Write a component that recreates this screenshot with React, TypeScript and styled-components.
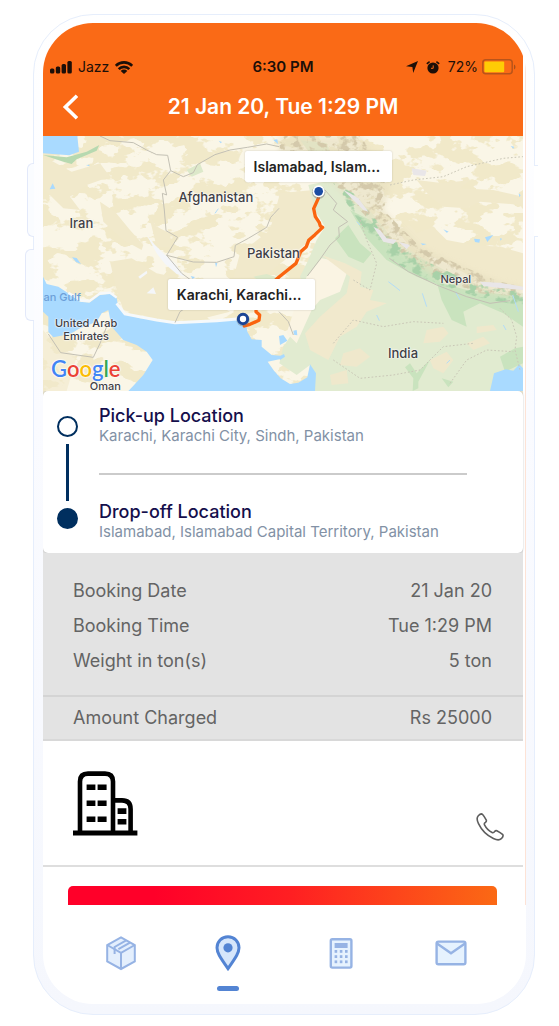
import React from "react";
import styled, { createGlobalStyle } from "styled-components";

const GlobalStyle = createGlobalStyle`
  *, *::before, *::after { box-sizing: border-box; }
  body {
    margin: 0;
    background: #fff;
    font-family: Inter, "Liberation Sans", sans-serif;
    -webkit-font-smoothing: antialiased;
  }
  button { padding: 0; border: 0; background: none; font: inherit; color: inherit; cursor: pointer; }
  svg { display: block; }
`;

/* ---------- phone shell ---------- */

const Page = styled.div`
  padding: 14px 24px 11px 33px;
`;

const Phone = styled.div`
  position: relative;
  border-radius: 60px;
  border: 1px solid #e6eefc;
  padding: 8px 8px 10px 9px;
  background: linear-gradient(#ffffff, #fafbff 40%, #f5f7fd);
`;

const SideKey = styled.span<{ $top: number; $height: number; $width: number }>`
  position: absolute;
  left: ${(p) => -p.$width}px;
  top: ${(p) => p.$top}px;
  width: ${(p) => p.$width}px;
  height: ${(p) => p.$height}px;
  border: 1px solid #e3e9fa;
  border-right: 0;
  border-radius: 6px 0 0 6px;
  background: #fafcff;
`;

const PowerKey = styled.span`
  position: absolute;
  right: -4px;
  top: 150px;
  width: 4px;
  height: 72px;
  background: #fff;
  border: 1px solid #e6eefc;
  border-width: 1px 0;
`;

const Screen = styled.main`
  overflow: hidden;
  border-radius: 50px;
  background: #fff;
`;

const Content = styled.div`
  padding-right: 2px;
  border-right: 1px solid #fde3d6;
`;

/* ---------- header ---------- */

const Header = styled.header`
  padding: 34px 7px 9px;
  background: #fa6a16;
`;

const StatusBar = styled.div`
  display: grid;
  grid-template-columns: 1fr auto 1fr;
  align-items: center;
  height: 20px;
  color: #1c0f08;
  font-size: 14px;
  line-height: 20px;
`;

const StatusGroup = styled.div<{ $end?: boolean }>`
  display: flex;
  align-items: center;
  gap: ${(p) => (p.$end ? 8 : 6)}px;
  justify-content: ${(p) => (p.$end ? "flex-end" : "flex-start")};
`;

const Battery = styled.span`
  display: flex;
  align-items: center;
  gap: 4px;
`;

const Clock = styled.strong`
  font-size: 15px;
  font-weight: 600;
`;

const TitleBar = styled.div`
  display: grid;
  grid-template-columns: 40px 1fr 40px;
  align-items: center;
  height: 40px;
  margin-top: 10px;
`;

const BackButton = styled.button`
  display: flex;
  align-items: center;
  height: 40px;
  padding-left: 12px;
`;

const Title = styled.h1`
  margin: 0;
  color: #fff;
  font-size: 21px;
  font-weight: 600;
  line-height: 24px;
  text-align: center;
  white-space: nowrap;
`;

/* ---------- map ---------- */

const MapArea = styled.section`
  position: relative;
  overflow: hidden;
  aspect-ratio: 480 / 255;

  > svg { width: 100%; height: 100%; }
`;

const Place = styled.span<{ $x: number; $y: number; $size?: number; $water?: boolean }>`
  position: absolute;
  left: ${(p) => p.$x}%;
  top: ${(p) => p.$y}%;
  transform: translate(-50%, -50%);
  color: ${(p) => (p.$water ? "#6d9fd8" : "#3f4044")};
  font-size: ${(p) => p.$size ?? 13}px;
  font-weight: 500;
  line-height: 13px;
  text-align: center;
  white-space: nowrap;
  text-shadow: ${(p) => (p.$water ? "none" : "0 0 2px #fff, 0 0 2px #fff, 0 0 1px #fff")};
`;

const Callout = styled.span<{ $x: number; $y: number }>`
  position: absolute;
  left: ${(p) => p.$x}%;
  top: ${(p) => p.$y}%;
  width: 147px;
  padding: 0 9px;
  border-radius: 2px;
  background: #fff;
  box-shadow: 0 0 2px rgba(0, 0, 0, 0.2);
  color: #222;
  font-size: 14px;
  font-weight: 600;
  line-height: 31px;
  white-space: nowrap;
`;

const GoogleMark = styled.span`
  position: absolute;
  left: 8px;
  bottom: 12px;
  font-family: Lato, sans-serif;
  font-size: 22px;
  font-weight: 600;
  line-height: 20px;
  text-shadow: 0 0 2px #fff, 0 0 2px #fff, 0 0 2px #fff;
`;

const Letter = styled.span<{ $color: string }>`
  color: ${(p) => p.$color};
`;

/* ---------- locations ---------- */

const CardBackdrop = styled.div`
  background: linear-gradient(#ece6d0 50%, #e3e3e3 50%);
`;

const LocationCard = styled.section`
  display: flex;
  gap: 21px;
  padding: 15px 56px 11px 14px;
  border-radius: 5px;
  background: #fff;
  box-shadow: 0 0 2px rgba(0, 0, 0, 0.25);
`;

const Track = styled.div`
  display: flex;
  flex-direction: column;
  align-items: center;
  flex: none;
  padding-top: 10px;
`;

const Stop = styled.span<{ $filled?: boolean }>`
  width: 21px;
  height: 21px;
  border: 2px solid #002f5f;
  border-radius: 50%;
  background: ${(p) => (p.$filled ? "#002f5f" : "#fff")};
`;

const Link = styled.span`
  width: 3px;
  height: 57px;
  margin: 7px 0;
  background: #002f5f;
`;

const Stops = styled.div`
  flex: 1;
  min-width: 0;
`;

const StopTitle = styled.h2`
  margin: 0;
  color: #150f4c;
  font-size: 18px;
  font-weight: 500;
  line-height: 20px;
`;

const StopAddress = styled.p`
  margin: 0;
  color: #8291a5;
  font-size: 15px;
  line-height: 20px;
  white-space: nowrap;
`;

const Divider = styled.hr`
  height: 2px;
  margin: 27px 0;
  border: 0;
  background: #cbcbcb;
`;

/* ---------- booking details ---------- */

const Details = styled.dl`
  margin: 0;
  padding-top: 20px;
  background: #e3e3e3;
  border-bottom: 2px solid #d8d8d8;
`;

const DetailRow = styled.div<{ $total?: boolean }>`
  display: flex;
  justify-content: space-between;
  padding: 0 31px 0 30px;
  margin-top: ${(p) => (p.$total ? 17 : 0)}px;
  border-top: ${(p) => (p.$total ? "2px solid #d4d4d4" : "0")};
  color: #646464;
  font-size: 18px;
  line-height: ${(p) => (p.$total ? 42 : 35)}px;

  dd { margin: 0; }
`;

const Contact = styled.section`
  display: flex;
  align-items: flex-end;
  justify-content: space-between;
  height: 126px;
  padding: 0 19px 24px 30px;
  border-bottom: 2px solid #dedede;
`;

const CompanyIcon = styled.svg`
  margin-bottom: 5px;
`;

const ActionArea = styled.div`
  padding: 19px 26px 0 25px;
`;

const ActionButton = styled.button`
  display: block;
  width: 100%;
  height: 19px;
  border-radius: 5px 5px 0 0;
  background: linear-gradient(90deg, #ff0029 20%, #ff1f22 52%, #fb6914);
`;

/* ---------- tab bar ---------- */

const TabBar = styled.nav`
  display: grid;
  grid-template-columns: 108fr 106fr 120fr 100fr;
  height: 99px;
  padding: 30px 25px 0 24px;
`;

const Tab = styled.button<{ $active?: boolean }>`
  display: flex;
  flex-direction: column;
  align-items: center;
  height: 60px;

  &::after {
    content: "";
    flex: none;
    width: 22px;
    height: 5px;
    margin-top: 15px;
    border-radius: 3px;
    background: ${(p) => (p.$active ? "#5384d3" : "transparent")};
  }
`;

/* Each unit of the map drawing is a third of a pixel at the default width. */
const MapDrawing = () => (
  <svg viewBox="129 18 1440 765" preserveAspectRatio="xMidYMid slice" aria-hidden="true">
    <defs>
      <filter id="patches" x="0" y="0" width="100%" height="100%" colorInterpolationFilters="sRGB">
        <feTurbulence type="fractalNoise" baseFrequency="0.013 0.02" numOctaves="4" seed="11" />
        <feColorMatrix values="0 0 0 0 0.945  0 0 0 0 0.914  0 0 0 0 0.79  24 0 0 0 -12" />
        <feComposite in2="SourceGraphic" operator="in" />
      </filter>
      <filter id="ridges" x="0" y="0" width="100%" height="100%" colorInterpolationFilters="sRGB">
        <feTurbulence type="fractalNoise" baseFrequency="0.04 0.05" numOctaves="3" seed="4" />
        <feColorMatrix values="0 0 0 0 0.83  0 0 0 0 0.79  0 0 0 0 0.67  7 0 0 0 -3.5" />
        <feComposite in2="SourceGraphic" operator="in" />
      </filter>
      <filter id="forest" x="0" y="0" width="100%" height="100%" colorInterpolationFilters="sRGB">
        <feTurbulence type="fractalNoise" baseFrequency="0.03 0.04" numOctaves="3" seed="8" />
        <feColorMatrix values="0 0 0 0 0.66  0 0 0 0 0.82  0 0 0 0 0.66  7 0 0 0 -3.5" />
        <feComposite in2="SourceGraphic" operator="in" />
      </filter>
      <filter id="soft"><feGaussianBlur stdDeviation="8" /></filter>
    </defs>

    <rect x="129" y="18" width="1440" height="765" fill="#faf6e7" />
    <rect x="129" y="18" width="1440" height="765" filter="url(#patches)" />

    {/* arid belts */}
    <g fill="#f1e9cb">
      <path d="M129 85 L160 95 L215 125 L300 100 L330 140 L260 165 L210 200 L240 240 L190 235 L129 175Z" />
      <path d="M300 215 L345 245 L390 300 L430 345 L425 360 L370 330 L310 275Z" />
      <path d="M330 395 L395 385 L470 430 L540 445 L590 490 L690 545 L600 568 L525 570 L420 555 L370 540 L350 480Z" />
      <path d="M445 250 L470 290 L510 310 L515 350 L470 350Z" />
      <path d="M840 190 L940 180 L945 240 L960 290 L920 340 L880 370 L790 440 L700 445 L720 370 L810 300Z" />
      <path d="M1250 150 L1330 160 L1410 150 L1380 175 L1480 180 L1569 200 L1569 225 L1440 215 L1400 235 L1330 230 L1290 200Z" />
      <path d="M1190 300 L1230 285 L1250 310 L1300 290 L1340 330 L1420 345 L1500 350 L1569 370 L1569 480 L1450 460 L1340 400 L1230 350Z" />
      <path d="M129 600 L165 640 L230 680 L200 783 L129 783Z" opacity="0.6" />
    </g>

    {/* Indian plains */}
    <path
      d="M925 165 L1000 150 L1060 190 L1130 265 L1180 330 L1260 380 L1370 440 L1460 475 L1569 490 L1569 783 L940 783 L930 705 L890 735 L838 700 L850 650 L890 590 L930 500 L900 440 L925 390 L950 330 L975 290 L945 240Z"
      fill="#e1ebd0"
    />
    <path d="M920 440 L965 385 L1020 395 L1042 425 L1020 485 L960 510 L935 540 L890 640 L860 610 L885 530Z" fill="#faf4e3" />
    <path d="M965 375 L1035 400 L1085 425 L1080 470 L1120 480 L1110 510 L1160 520 L1100 545 L1070 590 L1020 620 L985 690 L930 660 L915 610 L960 560 L1040 490 L1050 440Z" fill="#f1e9cd" />
    <g fill="#efe8cc">
      <path d="M1030 670 L1080 655 L1110 680 L1070 710 L1020 705Z" />
      <path d="M1280 600 L1330 590 L1345 610 L1320 635 L1270 640Z" />
      <path d="M1400 640 L1450 620 L1470 640 L1420 660Z" />
      <path d="M1290 690 L1340 665 L1360 690 L1330 730 L1300 715Z" />
      <path d="M990 735 L1040 720 L1045 760 L995 765Z" />
      <path d="M1430 590 L1480 585 L1490 600 L1430 610Z" />
    </g>

    {/* wooded foothills */}
    <g fill="#c9e3be">
      <path d="M1005 325 L1045 285 L1080 340 L1115 370 L1090 400 L1045 380Z" />
      <path d="M1050 240 L1110 270 L1180 345 L1290 400 L1330 470 L1250 440 L1160 390 L1100 325Z" />
      <path d="M1310 455 L1400 480 L1569 500 L1569 590 L1510 550 L1440 520 L1390 545 L1400 590 L1355 570 L1325 510Z" />
      <path d="M1230 700 L1250 730 L1290 690 L1255 755 L1255 775 L1238 783 L1240 745 L1215 712Z" />
      <path d="M1500 680 L1545 655 L1569 650 L1569 700 L1515 725Z" />
      <path d="M1325 745 L1360 755 L1345 772Z" />
    </g>
    <path d="M129 75 L200 82 L260 65 L298 45 L290 62 L230 88 L215 102 L190 95Z" fill="#b7d9b0" />
    <g fill="#dde9ca">
      <path d="M760 440 L800 432 L840 445 L800 470Z" />
      <path d="M560 120 L600 100 L610 125 L575 140Z" />
      <path d="M900 30 L980 40 L1000 90 L960 110Z" />
    </g>

    {/* mountain relief */}
    <path d="M840 18 L1080 18 L1140 100 L1170 170 L1150 240 L1260 350 L1390 410 L1500 455 L1569 470 L1569 500 L1440 490 L1300 440 L1180 350 L1080 240 L1000 160 L900 130 L837 80Z" fill="#e7dfc0" opacity="0.6" filter="url(#soft)" />
    <path d="M840 18 L1080 18 L1140 100 L1170 170 L1150 240 L1260 350 L1390 410 L1500 455 L1569 470 L1569 500 L1440 490 L1300 440 L1180 350 L1080 240 L1000 160 L900 130 L837 80Z" fill="#000" filter="url(#ridges)" />
    <path d="M1000 160 L1060 190 L1180 330 L1290 400 L1400 450 L1569 475 L1569 530 L1430 500 L1290 455 L1180 395 L1080 280Z" fill="#000" filter="url(#forest)" />
    <g fill="#e9e6e8">
      <path d="M1030 180 L1050 190 L1075 205 L1105 245 L1090 240 L1065 215Z" />
      <path d="M1120 290 L1140 300 L1160 325 L1190 330 L1180 342 L1150 335Z" />
      <path d="M1235 115 L1280 122 L1275 138 L1240 135Z" />
      <path d="M1440 455 L1500 458 L1569 470 L1569 480 L1500 474 L1450 468Z" />
      <path d="M1195 335 L1230 345 L1220 358Z" />
    </g>
    <g fill="#f4f6f9">
      <path d="M440 315 L465 345 L490 370 L525 400 L555 440 L530 432 L495 402 L470 370Z" />
      <path d="M415 440 L440 422 L442 430 L420 446Z" />
      <path d="M440 490 L460 472 L468 492Z" />
    </g>

    {/* seas and lakes */}
    <g fill="#a9daff">
      <path d="M129 18 L232 18 L237 65 L208 76 L129 70Z" />
      <path d="M129 440 L140 462 L175 470 L205 490 L240 515 L268 518 L300 495 L330 492 L350 505 L355 530 L375 552 L420 565 L470 570 L525 578 L590 575 L650 570 L720 566 L738 580 L742 605 L755 628 L785 630 L785 650 L815 675 L850 678 L838 688 L803 695 L822 722 L842 745 L870 762 L895 758 L922 742 L930 703 L948 730 L945 783 L385 783 L405 762 L430 735 L458 690 L440 665 L410 645 L370 630 L335 590 L325 540 L305 550 L290 575 L240 595 L210 612 L160 622 L145 606 L145 560 L129 545Z" />
      <path d="M1470 783 L1482 730 L1517 718 L1540 722 L1558 703 L1569 715 L1569 783Z" />
      <path d="M837 618 L850 615 L862 632 L840 645Z M880 602 L890 600 L892 616 L882 614Z M836 680 L852 672 L855 680 L840 690Z" />
      <path d="M158 160 L166 176 L149 178Z M258 105 L268 104 L268 109Z M216 382 L230 384 L243 402 L228 396Z M645 396 L652 400 L648 412Z M572 438 L585 441 L578 447Z M820 30 L832 28 L834 42Z M656 32 L666 36 L662 40Z" />
      <path d="M1422 326 L1440 328 L1438 338 L1425 336Z M1455 322 L1480 315 L1462 336Z M1262 340 L1280 342 L1268 346Z M1330 298 L1346 305 L1340 308Z M1532 48 L1542 50 L1540 56Z M1556 190 L1562 196 L1558 202Z M1500 325 L1506 326 L1502 332Z" />
    </g>
    <g fill="none" stroke="#b3dcf8" strokeWidth="3">
      <path d="M1165 455 L1185 470 L1200 482 M1267 490 L1280 530 M1366 485 L1380 510 M1080 285 L1070 275 M1510 585 L1518 600 M1538 495 L1555 545 M1130 555 L1138 572 M1340 700 L1350 690 M645 250 L655 236" />
    </g>
    <path d="M350 520 L375 552 L470 570 L525 578 L650 572 L720 566" fill="none" stroke="#f6f9fb" strokeWidth="9" />
    <path d="M205 488 L245 512 L270 512 L300 490 L330 488 L350 503" fill="none" stroke="#f6f9fb" strokeWidth="7" />

    {/* borders */}
    <g fill="none" stroke="#c3c0b4" strokeWidth="3" strokeLinejoin="round">
      <path d="M300 18 L330 32 L400 38 L440 60 L470 74 L503 76 L512 122 L490 150 L500 195 L487 190 L493 240 L498 302 L533 322 L500 376 L580 396 L650 397 L702 380 L706 346 L745 325 L800 292 L812 262 L837 235" />
      <path d="M512 122 L550 140 L580 128 L592 104 L645 74 L690 60 L742 52 L800 42 L837 50" />
      <path d="M500 376 L545 430 L600 470 L585 515 L540 545 L525 578" />
      <path d="M145 612 L182 668 L280 682 L300 640 L320 590" />
      <path d="M922 438 L960 388 L990 345 L1018 320 L1016 292 L1043 275 L1000 240 L1010 220 L975 180" />
      <path d="M837 545 L865 575 L880 615" />
      <path d="M1168 385 L1225 425 L1310 465 L1400 500 L1470 520 L1530 512" />
    </g>
    <g fill="none" stroke="#c9c6b6" strokeWidth="3" strokeDasharray="5 6">
      <path d="M1170 165 L1240 150 L1330 140 L1400 110 L1510 85 L1569 80" />
      <path d="M1000 640 L1060 570 L1150 590 L1240 575 L1330 580 M1000 690 L1080 745 L1180 735 L1260 720 L1330 650 L1420 640 M1350 760 L1400 690 L1460 660 L1540 665" />
      <path d="M1080 270 L1100 330 L1130 400 L1110 480 L1060 450" />
      <path d="M1500 535 L1535 570 L1550 620 L1545 660 L1560 720" />
    </g>

    {/* route */}
    <g fill="none" stroke="#fa640f" strokeWidth="10" strokeLinejoin="round" strokeLinecap="round">
      <path d="M955 205 L941 236 L946 260 L958 278 L961 288 L968 292 L945 314 L926 331 L919 350 L902 365 L888 400 L837 441 L770 500 L768 545 L779 555 L777 571 L750 583 L733 588" />
    </g>
    <circle cx="956" cy="187" r="20" fill="#777" opacity="0.5" />
    <circle cx="956" cy="184" r="18" fill="#fff" />
    <circle cx="956" cy="184" r="13" fill="#1a4ca3" />
    <circle cx="729" cy="569" r="20" fill="#777" opacity="0.4" />
    <circle cx="729" cy="567" r="14" fill="#fff" stroke="#1a4494" strokeWidth="9" />
  </svg>
);

const SignalIcon = () => (
  <svg width="22" height="14" viewBox="0 0 22 14" fill="currentColor" aria-hidden="true">
    <rect x="0" y="8.5" width="4.4" height="5" rx="1.5" />
    <rect x="5.8" y="6.4" width="4.4" height="7.1" rx="1.5" />
    <rect x="11.6" y="4" width="4.4" height="9.5" rx="1.5" />
    <rect x="17.4" y="1" width="4.4" height="12.5" rx="1.5" />
  </svg>
);

const WifiIcon = () => (
  <svg width="18" height="13" viewBox="0 0 18 13" fill="none" stroke="currentColor" strokeWidth="2.6" aria-hidden="true">
    <path d="M0.8 4.8 A11.6 11.6 0 0 1 17.2 4.8" />
    <path d="M3.7 8.1 A7.5 7.5 0 0 1 14.3 8.1" />
    <path d="M9 13 L5.7 10 A4.6 4.6 0 0 1 12.3 10Z" fill="currentColor" stroke="none" />
  </svg>
);

const ArrowIcon = () => (
  <svg width="12" height="12" viewBox="0 0 12 12" fill="currentColor" aria-hidden="true">
    <path d="M12 0 L7.2 12 L6.4 5.9 L0 5.2Z" />
  </svg>
);

const AlarmIcon = () => (
  <svg width="14" height="13" viewBox="0 0 14 13" aria-hidden="true">
    <circle cx="7" cy="7" r="5.6" fill="currentColor" />
    <path d="M1.4 2.4 L3 1.1 M12.6 2.4 L11 1.1" stroke="currentColor" strokeWidth="1.7" strokeLinecap="round" />
    <path d="M7.2 4.4 V7.3 H5" fill="none" stroke="#fa6a16" strokeWidth="1" />
  </svg>
);

const BatteryIcon = () => (
  <svg width="34" height="16" viewBox="0 0 34 16" aria-hidden="true">
    <rect x="0.8" y="0.8" width="29.4" height="14" rx="3" fill="none" stroke="#b9541a" strokeWidth="1.5" />
    <rect x="2.4" y="2.4" width="19.8" height="10.8" rx="1" fill="#ffcb05" />
    <path d="M32 5.5 C34 6.5 34 9.5 32 10.5Z" fill="#a9511b" />
  </svg>
);

const BackIcon = () => (
  <svg width="18" height="26" viewBox="0 0 18 26" fill="none" stroke="#fff" strokeWidth="3.6" aria-hidden="true">
    <path d="M15 1.8 L3.4 13 L15 24.2" strokeLinejoin="miter" />
  </svg>
);

const Building = () => (
  <CompanyIcon width="65" height="65" viewBox="0 0 65 65" aria-label="Company" role="img">
    <g fill="none" stroke="#000" strokeWidth="4.6">
      <path d="M7 61 V10.5 Q7 2.6 15 2.6 H32 Q40 2.6 40 10.5 V61" />
      <path d="M40 29.4 H49 Q57.6 29.4 57.6 38 V61" />
    </g>
    <path d="M0 59.4 H64.4 V64.6 H0Z M13.6 13.4 H22.4 V19 H13.6Z M24.6 13.4 H33.6 V19 H24.6Z M13.6 29.4 H22.4 V35 H13.6Z M24.6 29.4 H33.6 V35 H24.6Z M13.6 45.4 H22.4 V51 H13.6Z M24.6 45.4 H33.6 V51 H24.6Z M44.6 37.3 H53.4 V43 H44.6Z M44.6 48 H53.4 V53.6 H44.6Z" />
  </CompanyIcon>
);

const PhoneIcon = () => (
  <svg width="28" height="28" viewBox="0 0 28 28" fill="none" stroke="#5e5e5e" strokeWidth="1.6" strokeLinejoin="round" aria-hidden="true">
    <path d="M2.3 2.7 C3.7 1.3 5.7 0.6 6.6 1.5 C8 3 9.4 5.4 10.3 7.2 C10.7 8.1 10.2 8.8 9.4 9.4 C8.4 10.1 8 10.9 8.5 11.9 C9.9 14.6 13.4 18.2 16.1 19.5 C17.1 20 17.9 19.6 18.6 18.6 C19.2 17.8 19.9 17.3 20.8 17.7 C22.6 18.6 25 20 26.5 21.4 C27.4 22.3 26.7 24.3 25.3 25.7 C23.6 27.3 20.4 27 17.4 25.5 C11.3 22.6 5.4 16.7 2.5 10.6 C1 7.6 0.7 4.4 2.3 2.7Z" />
  </svg>
);

const BoxIcon = () => (
  <svg width="30" height="36" viewBox="0 0 30 36" fill="#e4effd" stroke="#96b3e4" strokeWidth="2" aria-hidden="true">
    <path d="M15 2.4 L28.8 10 V26.4 L15 34 L1.2 26.4 V10Z" />
    <path d="M1.2 10 L15 17.8 L28.8 10 M15 17.8 V34" fill="none" />
    <path d="M20.2 5.4 L8.6 12 V19 M24 7.6 L12.4 14.2" fill="none" />
  </svg>
);

const PinIcon = () => (
  <svg width="26" height="36" viewBox="0 0 26 36" aria-hidden="true">
    <path d="M13 1.8 C6.6 1.8 2 6.8 2 12.8 C2 17.6 4.6 21.6 13 33.6 C21.4 21.6 24 17.6 24 12.8 C24 6.8 19.4 1.8 13 1.8Z" fill="#d6e6fb" stroke="#5384d3" strokeWidth="3" />
    <circle cx="13" cy="12.8" r="4.6" fill="#5384d3" />
  </svg>
);

const CalculatorIcon = () => (
  <svg width="24" height="36" viewBox="0 0 24 36" aria-hidden="true">
    <rect x="1.8" y="4.2" width="20.6" height="28.4" rx="1.5" fill="#e6f2fe" stroke="#96b3e4" strokeWidth="2.4" />
    <rect x="5.6" y="8" width="13" height="5" fill="#96b3e4" />
    {[15, 20.2, 25.4].map((y) =>
      [5.6, 10.8, 16].map((x) => <rect key={`${x}-${y}`} x={x} y={y} width="2.6" height="2.8" fill="#96b3e4" />)
    )}
  </svg>
);

const MailIcon = () => (
  <svg width="32" height="36" viewBox="0 0 32 36" aria-hidden="true">
    <rect x="1.6" y="6.6" width="28.8" height="22.6" rx="1.8" fill="#e6f2fe" stroke="#96b3e4" strokeWidth="2.4" />
    <path d="M2 8.6 L16 18.2 L30 8.6" fill="none" stroke="#96b3e4" strokeWidth="2.4" />
  </svg>
);

const google: [string, string][] = [
  ["G", "#4285f4"],
  ["o", "#ea4335"],
  ["o", "#fbbc05"],
  ["g", "#4285f4"],
  ["l", "#34a853"],
  ["e", "#ea4335"],
];

const details = [
  { label: "Booking Date", value: "21 Jan 20" },
  { label: "Booking Time", value: "Tue 1:29 PM" },
  { label: "Weight in ton(s)", value: "5 ton" },
  { label: "Amount Charged", value: "Rs 25000", total: true },
];

export default function App() {
  return (
    <>
      <GlobalStyle />
      <Page>
        <Phone>
          <SideKey $top={148} $height={74} $width={7} />
          <SideKey $top={234} $height={72} $width={9} />
          <PowerKey />
          <Screen>
            <Content>
              <Header>
                <StatusBar>
                  <StatusGroup>
                    <SignalIcon />
                    <span>Jazz</span>
                    <WifiIcon />
                  </StatusGroup>
                  <Clock>6:30 PM</Clock>
                  <StatusGroup $end>
                    <ArrowIcon />
                    <AlarmIcon />
                    <Battery>
                      <span>72%</span>
                      <BatteryIcon />
                    </Battery>
                  </StatusGroup>
                </StatusBar>
                <TitleBar>
                  <BackButton aria-label="Back">
                    <BackIcon />
                  </BackButton>
                  <Title>21 Jan 20, Tue 1:29 PM</Title>
                </TitleBar>
              </Header>

              <MapArea aria-label="Route map">
                <MapDrawing />
                <Place $x={8} $y={34}>Iran</Place>
                <Place $x={36} $y={24}>Afghanistan</Place>
                <Place $x={48} $y={46}>Pakistan</Place>
                <Place $x={86} $y={56} $size={11}>Nepal</Place>
                <Place $x={75} $y={85}>India</Place>
                <Place $x={4} $y={63} $size={11} $water>an Gulf</Place>
                <Place $x={9} $y={76} $size={11}>
                  United Arab
                  <br />
                  Emirates
                </Place>
                <Place $x={13} $y={98} $size={11}>Oman</Place>
                <GoogleMark>
                  {google.map(([char, color], i) => (
                    <Letter key={i} $color={color}>{char}</Letter>
                  ))}
                </GoogleMark>
                <Callout $x={42} $y={6}>Islamabad, Islam...</Callout>
                <Callout $x={26} $y={56}>Karachi, Karachi...</Callout>
              </MapArea>

              <CardBackdrop>
                <LocationCard>
                  <Track>
                    <Stop />
                    <Link />
                    <Stop $filled />
                  </Track>
                  <Stops>
                    <StopTitle>Pick-up Location</StopTitle>
                    <StopAddress>Karachi, Karachi City, Sindh, Pakistan</StopAddress>
                    <Divider />
                    <StopTitle>Drop-off Location</StopTitle>
                    <StopAddress>Islamabad, Islamabad Capital Territory, Pakistan</StopAddress>
                  </Stops>
                </LocationCard>
              </CardBackdrop>

              <Details>
                {details.map((d) => (
                  <DetailRow key={d.label} $total={d.total}>
                    <dt>{d.label}</dt>
                    <dd>{d.value}</dd>
                  </DetailRow>
                ))}
              </Details>

              <Contact>
                <Building />
                <button aria-label="Call">
                  <PhoneIcon />
                </button>
              </Contact>

              <ActionArea>
                <ActionButton aria-label="Continue" />
              </ActionArea>
            </Content>

            <TabBar>
              <Tab aria-label="Packages"><BoxIcon /></Tab>
              <Tab aria-label="Track" $active><PinIcon /></Tab>
              <Tab aria-label="Estimate"><CalculatorIcon /></Tab>
              <Tab aria-label="Messages"><MailIcon /></Tab>
            </TabBar>
          </Screen>
        </Phone>
      </Page>
    </>
  );
}
